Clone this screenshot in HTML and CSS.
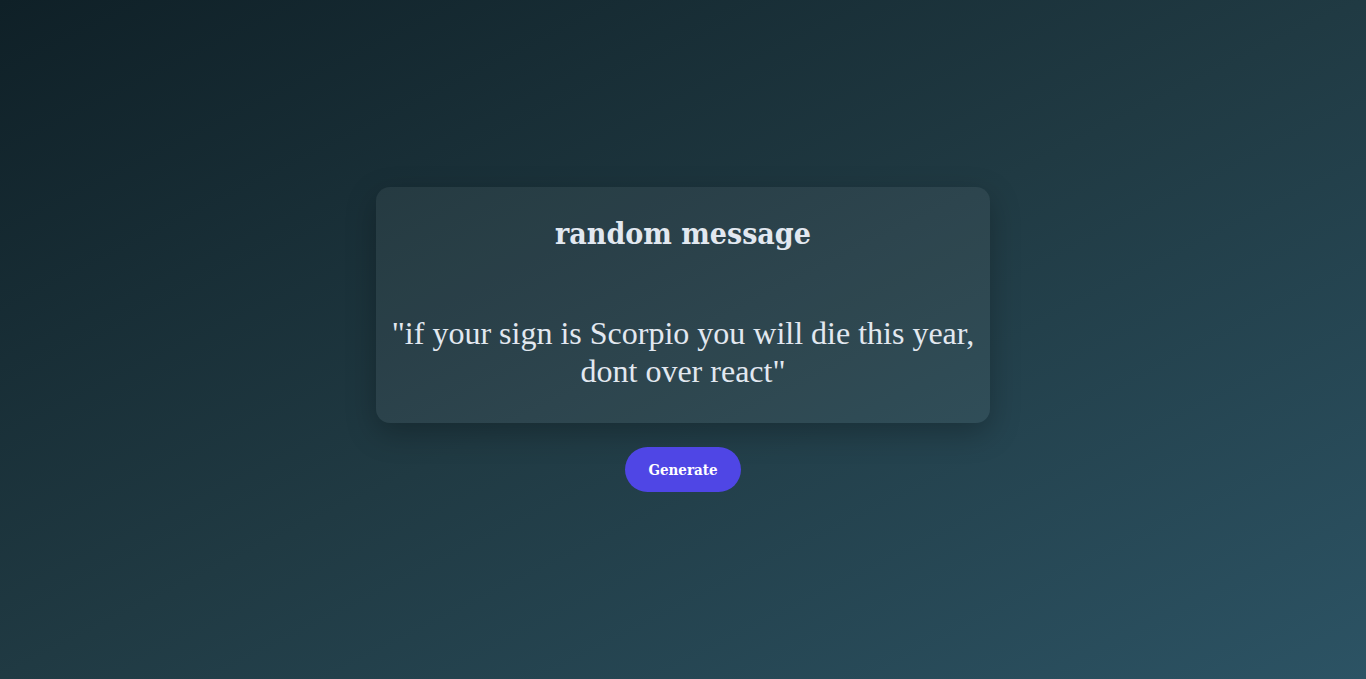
FILE: index.html
```html
<!DOCTYPE html>
<html lang="en">
<head>
<meta charset="utf-8">
<title>random message</title>
<link rel="stylesheet" href="styles.css">
</head>
<body>
<main class="page">
  <section class="card">
    <h1 class="title">random message</h1>
    <p class="quote">"if your sign is Scorpio you will die this year, dont over react"</p>
  </section>
  <button class="btn" type="button">Generate</button>
</main>
</body>
</html>
```
FILE: styles.css
```css
* { box-sizing: border-box; }
html, body { margin: 0; height: 100%; }
body {
  background: linear-gradient(to bottom right, #0f2027, #203a43, #2c5364);
  color: #e2e8f0;
}
.page {
  height: 679px;
  display: flex;
  flex-direction: column;
  align-items: center;
  justify-content: center;
  gap: 24px;
}
.card {
  width: 614px;
  height: 236px;
  padding: 26px 14px 0;
  border-radius: 14px;
  background: rgba(255, 255, 255, 0.06);
  box-shadow: 0 10px 30px rgba(0, 0, 0, 0.25);
  text-align: center;
}
.title {
  margin: 0;
  font-family: "DejaVu Serif Condensed", "DejaVu Serif", serif;
  font-weight: bold;
  font-size: 30px;
  line-height: 42px;
  color: #e2e8f0;
}
.quote {
  margin: 59px 0 0;
  font-family: "Liberation Serif", serif;
  font-size: 32px;
  line-height: 38px;
  color: #e2e8f0;
}
.btn {
  width: 116px;
  height: 45px;
  border: none;
  border-radius: 999px;
  background: #4f46e5;
  color: #ffffff;
  font-family: "DejaVu Serif Condensed", "DejaVu Serif", serif;
  font-weight: bold;
  font-size: 15px;
  cursor: pointer;
}
```
